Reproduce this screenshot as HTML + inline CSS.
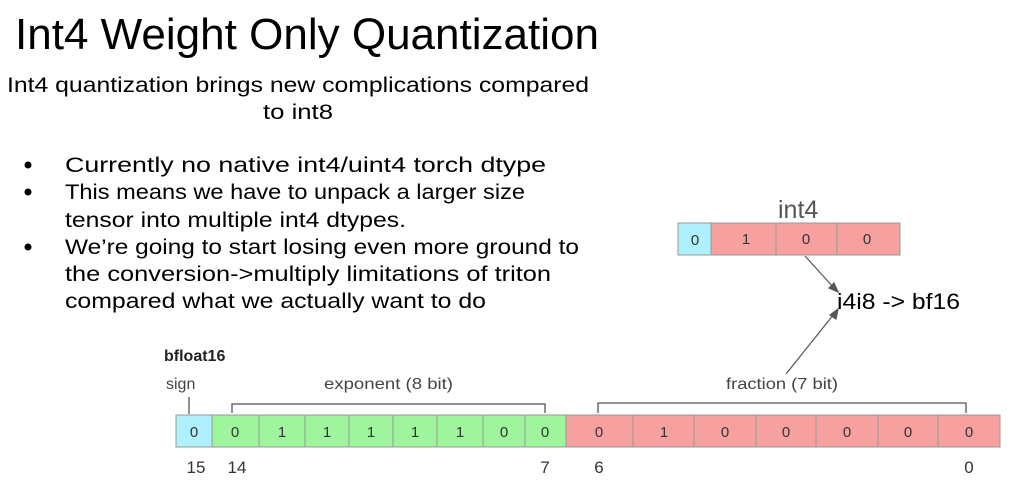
<!DOCTYPE html>
<html><head><meta charset="utf-8"><style>
html,body{margin:0;padding:0;background:#fff;width:1013px;height:489px;overflow:hidden}
svg{display:block}
</style></head><body>
<svg width="1013" height="489" xmlns="http://www.w3.org/2000/svg" font-family="Liberation Sans, sans-serif">
<text x="15" y="49" font-size="44" textLength="584" lengthAdjust="spacingAndGlyphs">Int4 Weight Only Quantization</text>
<text x="7" y="92" font-size="21" textLength="582" lengthAdjust="spacingAndGlyphs">Int4 quantization brings new complications compared</text>
<text x="263" y="119" font-size="21" textLength="70" lengthAdjust="spacingAndGlyphs">to int8</text>
<g font-size="21">
<circle cx="28" cy="165" r="3.5"/><circle cx="28" cy="192" r="3.5"/><circle cx="28" cy="247" r="3.5"/>
<text x="65" y="172" textLength="481" lengthAdjust="spacingAndGlyphs">Currently no native int4/uint4 torch dtype</text>
<text x="65" y="199" textLength="460" lengthAdjust="spacingAndGlyphs">This means we have to unpack a larger size</text>
<text x="65" y="227" textLength="341" lengthAdjust="spacingAndGlyphs">tensor into multiple int4 dtypes.</text>
<text x="65" y="254" textLength="514" lengthAdjust="spacingAndGlyphs">We’re going to start losing even more ground to</text>
<text x="65" y="281" textLength="486" lengthAdjust="spacingAndGlyphs">the conversion-&gt;multiply limitations of triton</text>
<text x="65" y="308" textLength="421" lengthAdjust="spacingAndGlyphs">compared what we actually want to do</text>
</g>
<!-- int4 -->
<text x="778" y="218" font-size="25" fill="#555">int4</text>
<g stroke="#999" stroke-width="1">
<rect x="678" y="223" width="33" height="32" fill="#aef0fb"/>
<rect x="711" y="223" width="65" height="32" fill="#f7a0a0"/>
<rect x="776" y="223" width="61" height="32" fill="#f7a0a0"/>
<rect x="837" y="223" width="63" height="32" fill="#f7a0a0"/>
</g>
<g font-size="15" fill="#333" text-anchor="middle">
<text x="695" y="245">0</text><text x="746" y="244">1</text><text x="806" y="244">0</text><text x="867" y="244">0</text>
</g>
<g stroke="#555" stroke-width="1.2" fill="#555">
<line x1="805" y1="256" x2="834" y2="288"/><polygon points="838,292 829,288 834,283"/>
<line x1="786" y1="374" x2="834" y2="314"/><polygon points="838,309 836,319 830,315"/>
</g>
<text x="837" y="309" font-size="22" textLength="123" lengthAdjust="spacingAndGlyphs">i4i8 -&gt; bf16</text>
<!-- bfloat16 -->
<text x="164" y="361" font-size="16" font-weight="bold" fill="#222">bfloat16</text>
<g font-size="16" fill="#444">
<text x="166" y="389">sign</text>
<text x="324" y="389" textLength="129" lengthAdjust="spacingAndGlyphs">exponent (8 bit)</text>
<text x="726" y="389" textLength="112" lengthAdjust="spacingAndGlyphs">fraction (7 bit)</text>
</g>
<g stroke="#555" stroke-width="1.3" fill="none">
<line x1="189" y1="397" x2="189" y2="414"/>
<polyline points="232,413 232,404 545,404 545,413"/>
<polyline points="598,413 598,403 966,403 966,413"/>
</g>
<g stroke="#999" stroke-width="1">
<rect x="176" y="415" width="36" height="32" fill="#aef0fb"/>
<rect x="212" y="415" width="47" height="32" fill="#9ef59e"/>
<rect x="259" y="415" width="46" height="32" fill="#9ef59e"/>
<rect x="305" y="415" width="44" height="32" fill="#9ef59e"/>
<rect x="349" y="415" width="44" height="32" fill="#9ef59e"/>
<rect x="393" y="415" width="44" height="32" fill="#9ef59e"/>
<rect x="437" y="415" width="46" height="32" fill="#9ef59e"/>
<rect x="483" y="415" width="42" height="32" fill="#9ef59e"/>
<rect x="525" y="415" width="41" height="32" fill="#9ef59e"/>
<rect x="566" y="415" width="67" height="32" fill="#f7a0a0"/>
<rect x="633" y="415" width="61" height="32" fill="#f7a0a0"/>
<rect x="694" y="415" width="62" height="32" fill="#f7a0a0"/>
<rect x="756" y="415" width="60" height="32" fill="#f7a0a0"/>
<rect x="816" y="415" width="62" height="32" fill="#f7a0a0"/>
<rect x="878" y="415" width="60" height="32" fill="#f7a0a0"/>
<rect x="938" y="415" width="62" height="32" fill="#f7a0a0"/>
</g>
<g font-size="15" fill="#333" text-anchor="middle">
<text x="194" y="437">0</text><text x="235" y="437">0</text><text x="282" y="437">1</text><text x="327" y="437">1</text>
<text x="371" y="437">1</text><text x="415" y="437">1</text><text x="460" y="437">1</text><text x="504" y="437">0</text>
<text x="545" y="437">0</text><text x="599" y="437">0</text><text x="664" y="437">1</text><text x="725" y="437">0</text>
<text x="786" y="437">0</text><text x="847" y="437">0</text><text x="908" y="437">0</text><text x="969" y="437">0</text>
</g>
<g font-size="17" fill="#333" text-anchor="middle">
<text x="196" y="473">15</text><text x="237" y="473">14</text><text x="545" y="473">7</text><text x="599" y="473">6</text><text x="969" y="473">0</text>
</g>
</svg>
</body></html>
